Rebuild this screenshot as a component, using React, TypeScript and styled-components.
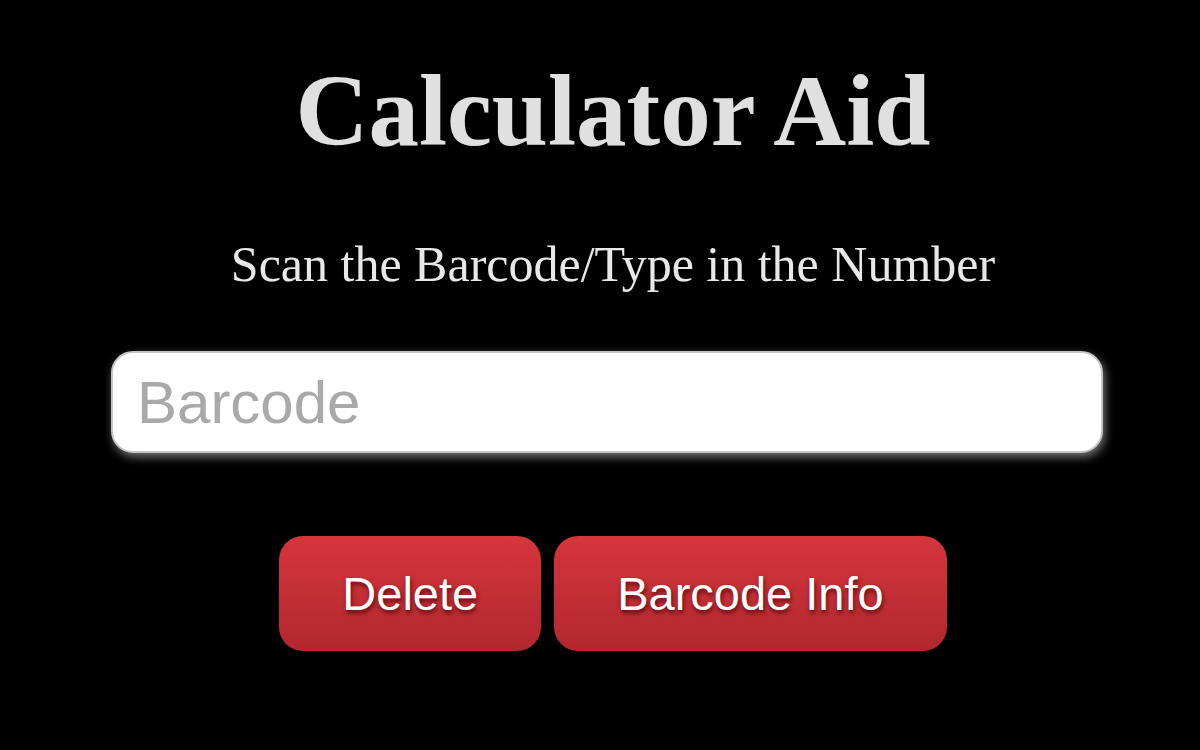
import React from "react";
import styled, { createGlobalStyle } from "styled-components";

const Global = createGlobalStyle`
  html, body { margin: 0; padding: 0; background: #000; }
  body { font-family: "Liberation Serif", "Times New Roman", serif; }
`;

const Page = styled.main`
  min-height: 750px;
  box-sizing: border-box;
  padding: 54px 0 0 26px;
  display: flex;
  flex-direction: column;
  align-items: center;
  background: #000;
`;

const Title = styled.h1`
  margin: 0;
  font-family: "Liberation Serif", "Times New Roman", serif;
  font-weight: 700;
  font-size: 101px;
  line-height: 115px;
  color: #e0e0e0;
`;

const Subtitle = styled.p`
  margin: 66px 0 0;
  font-family: "Liberation Serif", "Times New Roman", serif;
  font-size: 50px;
  line-height: 58px;
  color: #e8e8e8;
`;

const Input = styled.input`
  margin: 58px 12px 0 0;
  width: 992px;
  height: 102px;
  box-sizing: border-box;
  border: 2px solid #c4c4c4;
  border-radius: 22px;
  background: #fff;
  padding: 0 24px;
  font-family: "Liberation Sans", Arial, sans-serif;
  font-size: 60px;
  color: #333;
  outline: none;
  box-shadow: 2px 4px 10px rgba(255, 255, 255, 0.45);
  &::placeholder { color: #a9a9a9; }
`;

const Buttons = styled.div`
  margin-top: 83px;
  display: flex;
  gap: 13px;
`;

const Button = styled.button`
  height: 115px;
  padding: 0 63px;
  border: none;
  border-radius: 24px;
  background: linear-gradient(to bottom, #d6353c, #b2272e);
  color: #fff;
  font-family: "Liberation Sans", Arial, sans-serif;
  font-size: 47px;
  text-shadow: 1px 3px 4px rgba(60, 0, 0, 0.75);
  cursor: pointer;
`;

export default function App() {
  return (
    <>
      <Global />
      <Page>
        <Title>Calculator Aid</Title>
        <Subtitle>Scan the Barcode/Type in the Number</Subtitle>
        <Input placeholder="Barcode" />
        <Buttons>
          <Button>Delete</Button>
          <Button>Barcode Info</Button>
        </Buttons>
      </Page>
    </>
  );
}
